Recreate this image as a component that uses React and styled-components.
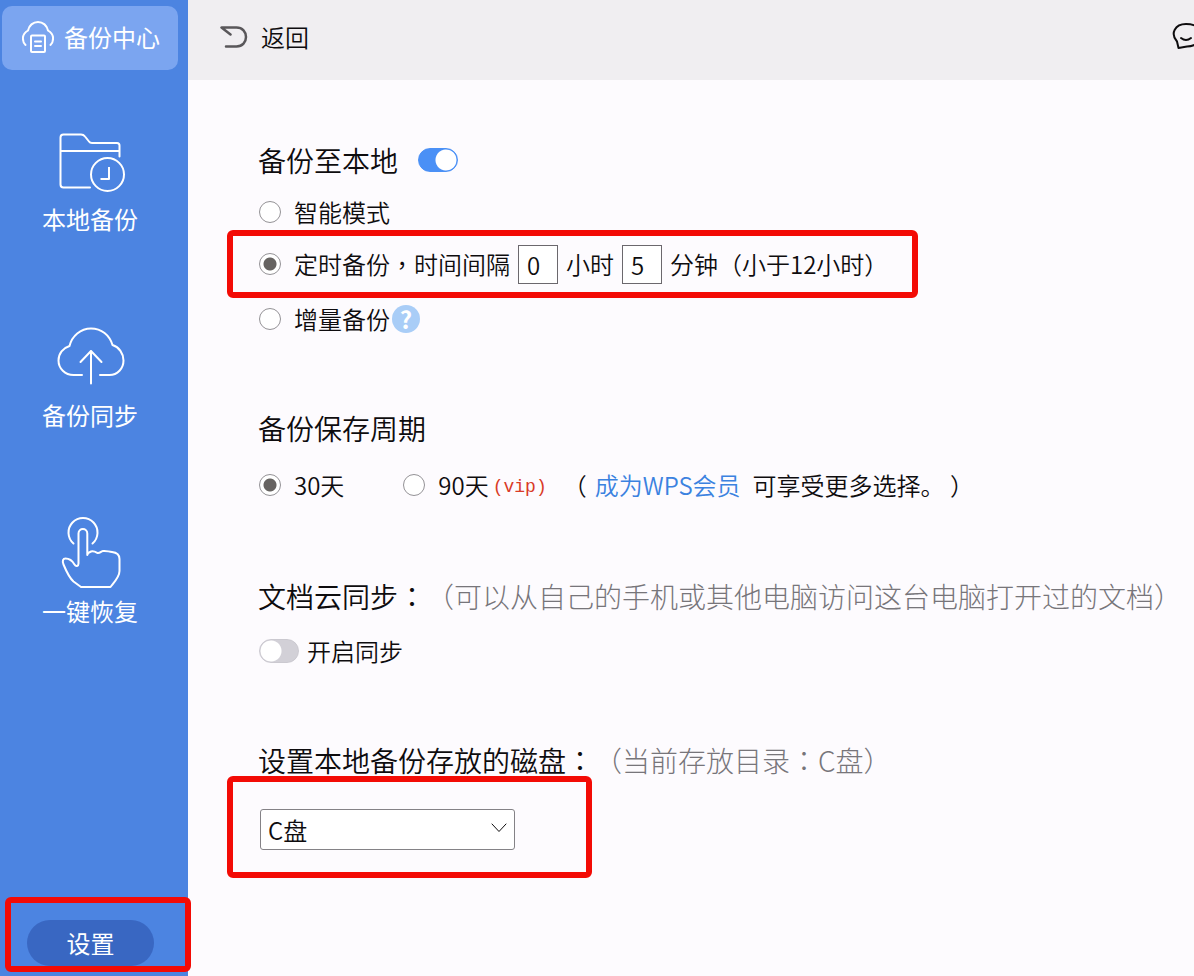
import React, { useState } from "react";
import styled, { createGlobalStyle } from "styled-components";

const GlobalStyle = createGlobalStyle`
  *, *::before, *::after { box-sizing: border-box; }
  body {
    margin: 0;
    background: #fdfbfe;
    color: #0e0c0e;
    font-family: "Noto Sans CJK SC", "Liberation Sans", sans-serif;
    font-size: 24px;
    font-weight: 350;
    line-height: 36px;
    text-spacing-trim: space-all;
  }
  button, input, select { font: inherit; color: inherit; }
  button { border: 0; padding: 0; background: none; cursor: pointer; }
`;

const Page = styled.div`
  display: flex;
  min-height: 100vh;
  overflow: hidden;
`;

const Sidebar = styled.aside`
  display: flex;
  flex-direction: column;
  flex: 0 0 188px;
  z-index: 1;
  padding-top: 6px;
  background: #4c84e1;
  color: #fff;
  font-weight: 400;
`;

const Brand = styled.button`
  display: flex;
  align-items: center;
  justify-content: center;
  gap: 10px;
  height: 64px;
  margin: 0 10px 0 2px;
  padding: 0 0 2px 2px;
  border-radius: 10px;
  background: #7ba5f0;
`;

const Nav = styled.nav`
  display: flex;
  flex-direction: column;
  gap: 86px;
  padding: 55px 8px 0 0;
`;

const NavItem = styled.button`
  display: flex;
  flex-direction: column;
  align-items: center;
  gap: 6px;
  line-height: 32px;
`;

const Icon = styled.svg`
  display: block;
  flex: none;
  fill: none;
  stroke: currentColor;
  stroke-width: ${(p) => p.$stroke || 2};
  stroke-linecap: round;
  stroke-linejoin: round;
`;

const Highlight = styled.div`
  width: fit-content;
  border: 6px solid #f30b05;
  border-radius: 6px;
`;

const SettingsHighlight = styled(Highlight)`
  width: auto;
  margin: auto -3px 4px 5px;
  padding: 17px 31px 0 16px;
`;

const SettingsButton = styled.button`
  width: 100%;
  height: 46px;
  border-radius: 23px;
  background: #3967c2;
`;

const Content = styled.div`
  flex: 1;
  min-width: 0;
`;

const Header = styled.header`
  display: flex;
  align-items: center;
  justify-content: space-between;
  height: 80px;
  padding: 0 0 7px 32px;
  background: #f0eef1;
`;

const BackButton = styled.button`
  display: flex;
  align-items: center;
  gap: 13px;
`;

const ChatButton = styled.button`
  margin-right: -8px;
`;

const Main = styled.main`
  display: flex;
  flex-direction: column;
  gap: 75px;
  padding: 64px 0 64px 39px;
  white-space: nowrap;
`;

const TitleRow = styled.div`
  display: flex;
  align-items: center;
  gap: 20px;
  padding-left: 31px;
  margin-bottom: ${(p) => p.$gap}px;
`;

const Title = styled.h2`
  margin: 0;
  font-size: 28px;
  font-weight: inherit;
  line-height: 32px;
`;

const Hint = styled.span`
  color: #77757a;
  font-weight: 300;
`;

/* Commas and colons that sit in the middle of their square. */
const Mid = styled.span.attrs({ lang: "zh-TW" })`
  font-family: "Noto Sans CJK TC", sans-serif;
  line-height: 1;
`;

const Row = styled.div`
  display: flex;
  align-items: center;
  gap: ${(p) => p.$gap || 0}px;
  min-height: 36px;
  padding-left: 32px;
`;

const TimedHighlight = styled(Highlight)`
  display: flex;
  align-items: center;
  gap: 8px;
  height: 68px;
  margin-bottom: 3px;
  padding: 0 24px 0 26px;
`;

const DiskHighlight = styled(Highlight)`
  padding: 27px 71px 22px 27px;
`;

const Choice = styled.label`
  display: flex;
  align-items: center;
  gap: 13px;
`;

const Radio = styled.input.attrs({ type: "radio" })`
  appearance: none;
  width: 22px;
  height: 22px;
  margin: 0;
  border: 1px solid #949296;
  border-radius: 50%;
  background: #fff;

  &:checked {
    background: radial-gradient(circle, #666361 6px, #fff 7px);
  }
`;

const Switch = styled.input.attrs({ type: "checkbox", role: "switch" })`
  appearance: none;
  width: 40px;
  height: 24px;
  margin: 0;
  border: 1px solid #cbc9d0;
  border-radius: 12px;
  background: radial-gradient(circle at 11px 11px, #fff 10px, #d2d0d7 11px);

  &:checked {
    border-color: #4a90f6;
    background: radial-gradient(circle at 27px 11px, #fff 10px, #4a90f6 11px);
  }
`;

const NumberBox = styled.input.attrs({ type: "text", inputMode: "numeric" })`
  width: 40px;
  height: 39px;
  padding: 0 0 0 8px;
  border: 1px solid #6b686d;
  border-radius: 0;
  background: #fff;
`;

const HelpButton = styled.button`
  width: 28px;
  height: 28px;
  margin-left: 2px;
  border-radius: 50%;
  background: #a9cdf7;
  color: #fff;
  font-weight: 700;
  line-height: 28px;
`;

const Vip = styled.span`
  padding-top: 4px;
  color: #d93a26;
  font-family: "Liberation Mono", monospace;
  font-size: 18px;
`;

const Period = styled.span`
  display: flex;
  align-items: center;
  gap: 4px;
`;

const MemberNote = styled.span`
  margin-left: 12px;
`;

const MemberLink = styled.a`
  margin: 0 12px 0 8px;
  color: #3b82e0;
  text-decoration: none;
`;

const SelectWrap = styled.div`
  position: relative;
  width: 255px;

  svg {
    position: absolute;
    top: 14px;
    right: 8px;
    pointer-events: none;
  }
`;

const Select = styled.select`
  display: block;
  appearance: none;
  width: 100%;
  height: 41px;
  padding: 0 32px 0 7px;
  border: 1px solid #848286;
  border-radius: 3px;
  background: #fff;
`;

function CloudDocIcon() {
  return (
    <Icon width="32" height="32" viewBox="0 0 32 32" aria-hidden="true">
      <path d="M3.5 24C1 22 .8 18.5 1 16c.4-3 2.500-5 5-6.500C7 4.500 11 1 16 1s9 3.500 10 8.500c2.500 1.500 4.600 3.500 5 6.500.2 2.500 0 6-2.500 8" />
      <rect x="9" y="14.500" width="14" height="16.500" rx="1" />
      <path d="M13 20.500h6M13 25h6" />
    </Icon>
  );
}

function FolderClockIcon() {
  return (
    <Icon width="72" height="72" viewBox="0 0 72 72" aria-hidden="true">
      <path d="M36 62.500H9.500Q6.500 62.500 6.500 59.500V12.500Q6.500 9.500 9.500 9.500H27Q29.500 9.500 31 11.500L35 16.500Q36 18 38 18H63Q65.500 18 65.500 20.500V31.500M6.500 26H65.500" />
      <circle cx="53.500" cy="49.500" r="16.500" />
      <path d="M55 42V54H46.500" strokeLinecap="butt" />
    </Icon>
  );
}

function CloudUploadIcon() {
  return (
    <Icon width="72" height="72" viewBox="0 7 72 72" aria-hidden="true">
      <path d="M28 61H19.500C11 61 4.500 54.500 4.500 46.500C4.500 39.500 9 34 15.500 32C18 22 26.500 14.500 37 14.500C47.500 14.500 55.500 21 58.500 31C65 33 69.500 39.500 69.500 46.500C69.500 54.500 63.500 61 55.500 61H46" />
      <path d="M37 69.500V37M26.500 48L37 37L47.500 48" />
    </Icon>
  );
}

function TapHandIcon() {
  return (
    <Icon width="72" height="72" viewBox="0 0 72 72" aria-hidden="true">
      <path d="M19.500 26.500A14.500 14.500 0 1 1 38.500 26.500" />
      <path d="M33.300 38V16.500C33.300 10.500 24.500 10.500 24.500 16.500V46.500C24.500 49.500 22 50 20.500 47.500C18.500 44 15.500 41.500 11.500 41.500C9 41.500 8 44 9.500 47.500C12 53.500 15 60.500 19.500 64.500L27 70H56.500C60 65.500 65.500 60 65.500 54V42C65.500 37.500 62.500 35.500 58 35C54 34.500 52 33.500 49 34C46.500 34.500 46 36.500 43.500 36C41 34.500 39.500 33.500 37 34.500C34.500 35.500 33.300 36.500 33.300 38" />
    </Icon>
  );
}

function BackIcon() {
  return (
    <Icon width="28" height="24" viewBox="0 0 28 24" $stroke={2.5} color="#59575a" aria-hidden="true">
      <path d="M10.500 9.500L1.500 2.500H16.500C22.500 2.500 26 7 26 12S22.500 21.500 16.500 21.500H6" />
    </Icon>
  );
}

function ChatIcon() {
  return (
    <Icon width="30" height="28" viewBox="0 0 30 28" aria-hidden="true">
      <path d="M6.500 25L5 18.500C-2 10.500 3 1 14 1C24 1 29 5.500 29 12C29 19 23 23.500 15 23.500L6.500 25Z" />
      <path d="M9 15Q14 19 19 15" />
    </Icon>
  );
}

const navItems = [
  { label: "本地备份", Glyph: FolderClockIcon },
  { label: "备份同步", Glyph: CloudUploadIcon },
  { label: "一键恢复", Glyph: TapHandIcon },
];

export default function App() {
  const [localBackup, setLocalBackup] = useState(true);
  const [cloudSync, setCloudSync] = useState(false);
  const [hours, setHours] = useState("0");
  const [minutes, setMinutes] = useState("5");

  return (
    <>
      <GlobalStyle />
      <Page lang="zh-CN">
        <Sidebar>
          <Brand type="button">
            <CloudDocIcon />
            备份中心
          </Brand>
          <Nav>
            {navItems.map(({ label, Glyph }) => (
              <NavItem type="button" key={label}>
                <Glyph />
                {label}
              </NavItem>
            ))}
          </Nav>
          <SettingsHighlight>
            <SettingsButton type="button">设置</SettingsButton>
          </SettingsHighlight>
        </Sidebar>

        <Content>
          <Header>
            <BackButton type="button">
              <BackIcon />
              返回
            </BackButton>
            <ChatButton type="button" aria-label="反馈">
              <ChatIcon />
            </ChatButton>
          </Header>

          <Main>
            <section>
              <TitleRow $gap={18}>
                <Title id="local-title">备份至本地</Title>
                <Switch
                  aria-labelledby="local-title"
                  checked={localBackup}
                  onChange={(e) => setLocalBackup(e.target.checked)}
                />
              </TitleRow>
              <Row>
                <Choice>
                  <Radio name="mode" value="smart" />
                  智能模式
                </Choice>
              </Row>
              <TimedHighlight>
                <Choice>
                  <Radio name="mode" value="timed" defaultChecked />
                  <span>定时备份<Mid>，</Mid>时间间隔</span>
                </Choice>
                <NumberBox id="hours" aria-label="小时" value={hours} onChange={(e) => setHours(e.target.value)} />
                <label htmlFor="hours">小时</label>
                <NumberBox id="minutes" aria-label="分钟" value={minutes} onChange={(e) => setMinutes(e.target.value)} />
                <label htmlFor="minutes">分钟（小于12小时）</label>
              </TimedHighlight>
              <Row>
                <Choice>
                  <Radio name="mode" value="incremental" />
                  增量备份
                </Choice>
                <HelpButton type="button">?</HelpButton>
              </Row>
            </section>

            <section>
              <TitleRow $gap={21}>
                <Title>备份保存周期</Title>
              </TitleRow>
              <Row $gap={59}>
                <Choice>
                  <Radio name="period" value="30" defaultChecked />
                  30天
                </Choice>
                <Period>
                  <Choice>
                    <Radio name="period" value="90" />
                    90天
                  </Choice>
                  <Vip>(vip)</Vip>
                  <MemberNote>
                    （<MemberLink href="#vip">成为WPS会员</MemberLink>可享受更多选择。 ）
                  </MemberNote>
                </Period>
              </Row>
            </section>

            <section>
              <TitleRow $gap={21}>
                <Title>
                  文档云同步<Mid>：</Mid>
                  <Hint>（可以从自己的手机或其他电脑访问这台电脑打开过的文档）</Hint>
                </Title>
              </TitleRow>
              <Row $gap={8}>
                <Switch
                  id="cloud-sync"
                  checked={cloudSync}
                  onChange={(e) => setCloudSync(e.target.checked)}
                />
                <label htmlFor="cloud-sync">开启同步</label>
              </Row>
            </section>

            <section>
              <TitleRow $gap={0}>
                <Title id="disk-title">
                  设置本地备份存放的磁盘<Mid>：</Mid>
                  <Hint>（当前存放目录<Mid>：</Mid>C盘）</Hint>
                </Title>
              </TitleRow>
              <DiskHighlight>
                <SelectWrap>
                  <Select aria-labelledby="disk-title" defaultValue="C">
                    <option value="C">C盘</option>
                  </Select>
                  <Icon width="16" height="10" viewBox="0 0 16 10" $stroke={1} aria-hidden="true">
                    <path d="M1 1L8 8.500L15 1" />
                  </Icon>
                </SelectWrap>
              </DiskHighlight>
            </section>
          </Main>
        </Content>
      </Page>
    </>
  );
}
